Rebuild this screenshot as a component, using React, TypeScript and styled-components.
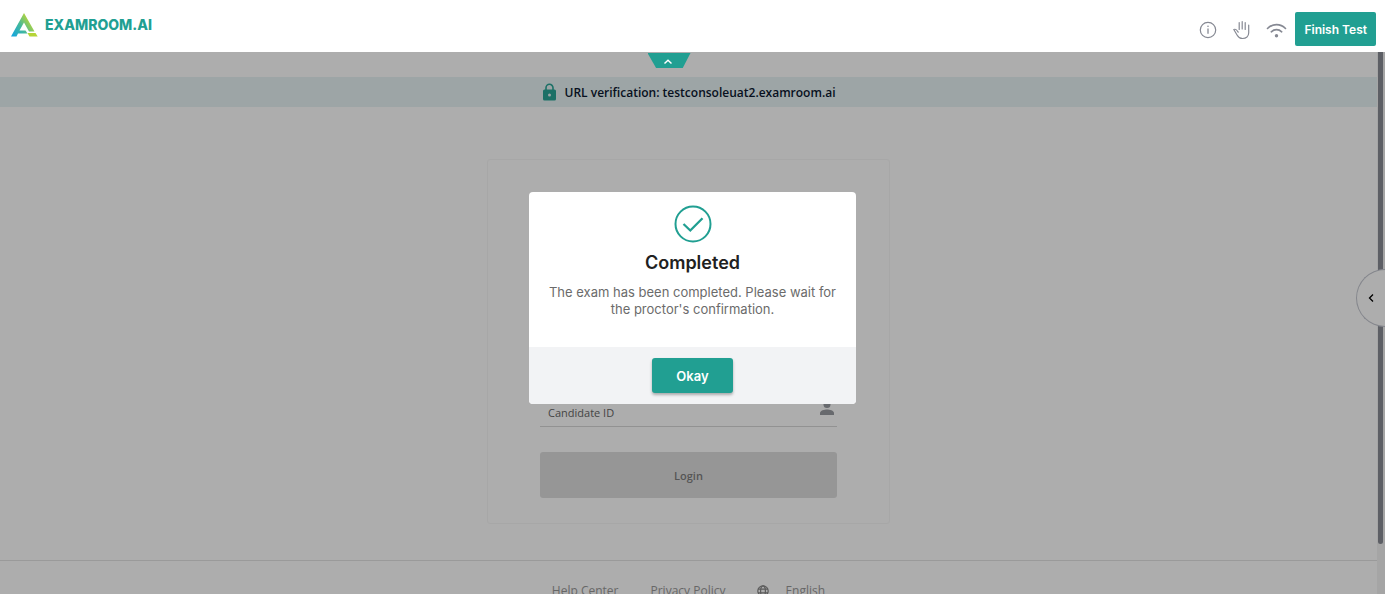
import React from "react";
import styled, { createGlobalStyle } from "styled-components";

const teal = "#219f92";
const inter = 'Inter, "Liberation Sans", sans-serif';
const humanist = '"Open Sans", "Noto Sans", sans-serif';

const GlobalStyle = createGlobalStyle`
  *, *::before, *::after { box-sizing: border-box; }
  body { margin: 0; font-family: ${inter}; background: #fff; }
  button, input { font: inherit; }
  button { border: 0; cursor: pointer; padding: 0; }
  h2, p { margin: 0; }
  svg { display: block; flex: none; }
`;

const Page = styled.div`
  display: flex;
  flex-direction: column;
  height: 100vh;
  overflow: hidden;
`;

const Header = styled.header`
  display: flex;
  justify-content: space-between;
  align-items: flex-start;
  flex: none;
  height: 52px;
  padding: 12px 9px 0 11px;
  background: #fff;
`;

const Brand = styled.a`
  display: flex;
  align-items: center;
  gap: 7px;
  color: ${teal};
  font-size: 14px;
  line-height: 26px;
  font-weight: 800;
  text-decoration: none;
`;

const Actions = styled.div`
  display: flex;
  align-items: center;
  gap: 15px;
`;

const IconButton = styled.button`
  display: flex;
  padding-top: 2px;
  color: #868993;
  background: none;
`;

const FinishButton = styled.button`
  height: 34px;
  padding: 0 9px;
  margin-left: -7px;
  border-radius: 2px;
  color: #fff;
  background: ${teal};
  font-size: 12px;
  font-weight: 600;
`;

const Main = styled.main`
  position: relative;
  display: flex;
  flex: 1;
  min-height: 0;
  overflow: hidden;
`;

const Content = styled.div`
  display: flex;
  flex-direction: column;
  flex: 1;
  padding-top: 25px;
  font-family: ${humanist};
  background: #fff;
`;

const UrlBar = styled.div`
  display: flex;
  align-items: center;
  justify-content: center;
  flex: none;
  gap: 8px;
  height: 30px;
  color: #0c1830;
  background: #e7f4f5;
  font-size: 12px;
  font-weight: 600;
`;

const Card = styled.form`
  display: flex;
  flex-direction: column;
  justify-content: flex-end;
  gap: 25px;
  flex: none;
  width: 403px;
  height: 365px;
  margin: 52px auto 36px;
  padding: 0 52px 25px;
  border: 1px solid #f7f7f7;
  border-radius: 3px;
`;

const Field = styled.label`
  display: flex;
  align-items: center;
  height: 37px;
  padding: 0 3px 0 8px;
  border-bottom: 1px solid #d8d8d8;
  color: #9a9ca2;
`;

const FieldInput = styled.input`
  flex: 1;
  min-width: 0;
  padding: 8px 0 0;
  border: 0;
  outline: 0;
  background: none;
  font-size: 11px;
  &::placeholder { color: #666; opacity: 1; }
`;

const LoginButton = styled.button`
  height: 46px;
  border-radius: 3px;
  color: #7e7e7e;
  background: #dedede;
  font-size: 11px;
  font-weight: 600;
`;

const Footer = styled.footer`
  display: flex;
  justify-content: center;
  flex: none;
  gap: 32px;
  padding-top: 20px;
  border-top: 1px solid #e4e4e4;
  color: #999;
  font-size: 12px;
  line-height: 20px;
`;

const FooterLink = styled.a`
  display: flex;
  align-items: center;
  gap: 16px;
  color: inherit;
  text-decoration: none;
`;

const ScrollRail = styled.div`
  flex: none;
  width: 8px;
  padding: 0 2px 50px 1px;
  background: #f3f3f3;
`;

const ScrollThumb = styled.div`
  height: 100%;
  border-radius: 0 0 3px 3px;
  background: #898d96;
`;

const DrawerHandle = styled.button`
  position: absolute;
  top: 217px;
  right: 0;
  display: flex;
  align-items: center;
  width: 29px;
  height: 58px;
  padding-left: 10px;
  border: 1px solid #c3c6cf;
  border-right: 0;
  border-radius: 29px 0 0 29px;
  color: #000;
  background: #fff;
`;

const Shade = styled.div`
  position: absolute;
  inset: 0;
  background: rgba(0, 0, 0, 0.32);
`;

const CollapseTab = styled.button`
  position: absolute;
  top: 1px;
  left: calc(50% - 45px);
  display: flex;
  justify-content: center;
  width: 43px;
  height: 15px;
  padding: 5px 3px 0 0;
  clip-path: polygon(0 0, 100% 0, 82% 100%, 20% 100%);
  color: #fff;
  background: ${teal};
`;

const ModalLayer = styled.div`
  position: fixed;
  inset: 0;
  display: flex;
  align-items: center;
  justify-content: center;
  padding-top: 2px;
  pointer-events: none;
`;

const Modal = styled.section`
  width: 327px;
  overflow: hidden;
  border-radius: 4px;
  background: #fff;
  text-align: center;
  pointer-events: auto;
`;

const ModalBody = styled.div`
  display: flex;
  flex-direction: column;
  align-items: center;
  padding: 13px 16px 29px;
`;

const ModalTitle = styled.h2`
  margin: 8px 0 9px;
  color: #212121;
  font-size: 18px;
  line-height: 24px;
  font-weight: 600;
`;

const ModalText = styled.p`
  color: #6b6b6b;
  font-size: 13px;
  line-height: 17px;
`;

const ModalActions = styled.div`
  display: flex;
  justify-content: center;
  padding: 11px;
  background: #f2f3f5;
`;

const OkayButton = styled.button`
  width: 81px;
  height: 35px;
  border-radius: 3px;
  color: #fff;
  background: ${teal};
  box-shadow: 0 2px 3px rgba(0, 0, 0, 0.3);
  font-size: 13px;
  font-weight: 600;
`;

const Logo = () => (
  <svg width="27" height="24" viewBox="0 0 27 24" aria-hidden="true">
    <defs>
      <linearGradient id="brand" gradientUnits="userSpaceOnUse" x1="2" y1="23" x2="22" y2="9">
        <stop offset="0" stopColor="#16a6dc" />
        <stop offset="0.5" stopColor="#45b99a" />
        <stop offset="1" stopColor="#c3d82f" />
      </linearGradient>
    </defs>
    <path
      fill="url(#brand)"
      d="M13 0 23.500 18.500H18L13 9.500 8.500 17.500H14.500L16.500 20.500H7L5.500 23.500H0Z"
    />
    <path fill="#b5d437" d="M16.500 20H24.500L26.700 23.500H18.500Z" />
  </svg>
);

const InfoIcon = () => (
  <svg width="18" height="18" viewBox="0 0 18 18" fill="none" stroke="currentColor">
    <circle cx="9" cy="9" r="7.700" strokeWidth="1.200" />
    <path d="M9 7.500v5.300" strokeWidth="1.300" />
    <circle cx="9" cy="5.300" r=".8" fill="currentColor" stroke="none" />
  </svg>
);

const HandIcon = () => (
  <svg width="19" height="20" viewBox="0 0 19 20" fill="none" stroke="currentColor" strokeWidth="1.200" strokeLinecap="round" strokeLinejoin="round">
    <path d="M7.200 9.500V2.500M10.200 9V1.500M13.200 9.500V2.500M16.700 5V12.800c0 3.500-2.600 5.700-6.200 5.700-2.600 0-4.100-1.100-5.300-3.300L1.800 9.500c1.500-.6 2.400-.2 3.200 1l1.200 1.700" />
  </svg>
);

const WifiIcon = () => (
  <svg width="21" height="18" viewBox="0 0 21 18" fill="none" stroke="currentColor" strokeWidth="1.600" strokeLinecap="round">
    <path d="M1.500 7.500C6.500 2.300 14.500 2.300 19.500 7.500M5.300 10.800c3-2.900 7.400-2.900 10.400 0" />
    <circle cx="10.500" cy="14.800" r="1.700" fill="currentColor" stroke="none" />
  </svg>
);

const LockIcon = () => (
  <svg width="15" height="18" viewBox="0 0 15 18">
    <path d="M4 7V4.800a3.500 3.500 0 0 1 7 0V7" fill="none" stroke="#2aa597" strokeWidth="1.600" />
    <rect x="1" y="6.500" width="13" height="11" rx="1.500" fill="#2aa597" />
    <circle cx="7.500" cy="12" r="1.500" fill="#e7f4f5" />
  </svg>
);

const PersonIcon = () => (
  <svg width="14" height="14" viewBox="0 0 14 14" fill="#9a9ca2">
    <circle cx="7" cy="3.500" r="3.500" />
    <path d="M0 14v-2c0-2.500 4.500-3.600 7-3.600s7 1.100 7 3.600v2Z" />
  </svg>
);

const GlobeIcon = () => (
  <svg width="12" height="12" viewBox="0 0 12 12" fill="none" stroke="#888" strokeWidth="1.200">
    <circle cx="6" cy="6" r="5.200" />
    <ellipse cx="6" cy="6" rx="2.400" ry="5.200" />
    <path d="M1 4.200h10M1 7.800h10" />
  </svg>
);

export default function App() {
  return (
    <Page>
      <GlobalStyle />
      <Header>
        <Brand href="#">
          <Logo />
          EXAMROOM.AI
        </Brand>
        <Actions>
          <IconButton aria-label="Information"><InfoIcon /></IconButton>
          <IconButton aria-label="Raise hand"><HandIcon /></IconButton>
          <IconButton aria-label="Connection"><WifiIcon /></IconButton>
          <FinishButton>Finish Test</FinishButton>
        </Actions>
      </Header>
      <Main>
        <Content>
          <UrlBar>
            <LockIcon />
            URL verification: testconsoleuat2.examroom.ai
          </UrlBar>
          <Card onSubmit={(event) => event.preventDefault()}>
            <Field>
              <FieldInput placeholder="Candidate ID" aria-label="Candidate ID" />
              <PersonIcon />
            </Field>
            <LoginButton disabled>Login</LoginButton>
          </Card>
          <Footer>
            <FooterLink href="#">Help Center</FooterLink>
            <FooterLink href="#">Privacy Policy</FooterLink>
            <FooterLink href="#"><GlobeIcon />English</FooterLink>
          </Footer>
        </Content>
        <ScrollRail><ScrollThumb /></ScrollRail>
        <DrawerHandle aria-label="Open panel">
          <svg width="8" height="10" viewBox="0 0 8 10" fill="none" stroke="currentColor" strokeWidth="1.300">
            <path d="M6 1.500 2.500 5 6 8.500" />
          </svg>
        </DrawerHandle>
        <Shade />
        <CollapseTab aria-label="Collapse header">
          <svg width="10" height="8" viewBox="0 0 10 8" fill="none" stroke="currentColor" strokeWidth="1.500">
            <path d="M1.500 5.500 5 2.300 8.500 5.500" />
          </svg>
        </CollapseTab>
      </Main>
      <ModalLayer>
        <Modal role="dialog" aria-modal="true" aria-labelledby="dialog-title">
          <ModalBody>
            <svg width="38" height="38" viewBox="0 0 38 38" fill="none" stroke={teal} strokeWidth="2">
              <circle cx="19" cy="19" r="17.500" />
              <path d="M9.500 19 16.300 25.500 28.500 13.300" strokeWidth="2.300" />
            </svg>
            <ModalTitle id="dialog-title">Completed</ModalTitle>
            <ModalText>The exam has been completed. Please wait for the proctor's confirmation.</ModalText>
          </ModalBody>
          <ModalActions>
            <OkayButton>Okay</OkayButton>
          </ModalActions>
        </Modal>
      </ModalLayer>
    </Page>
  );
}
